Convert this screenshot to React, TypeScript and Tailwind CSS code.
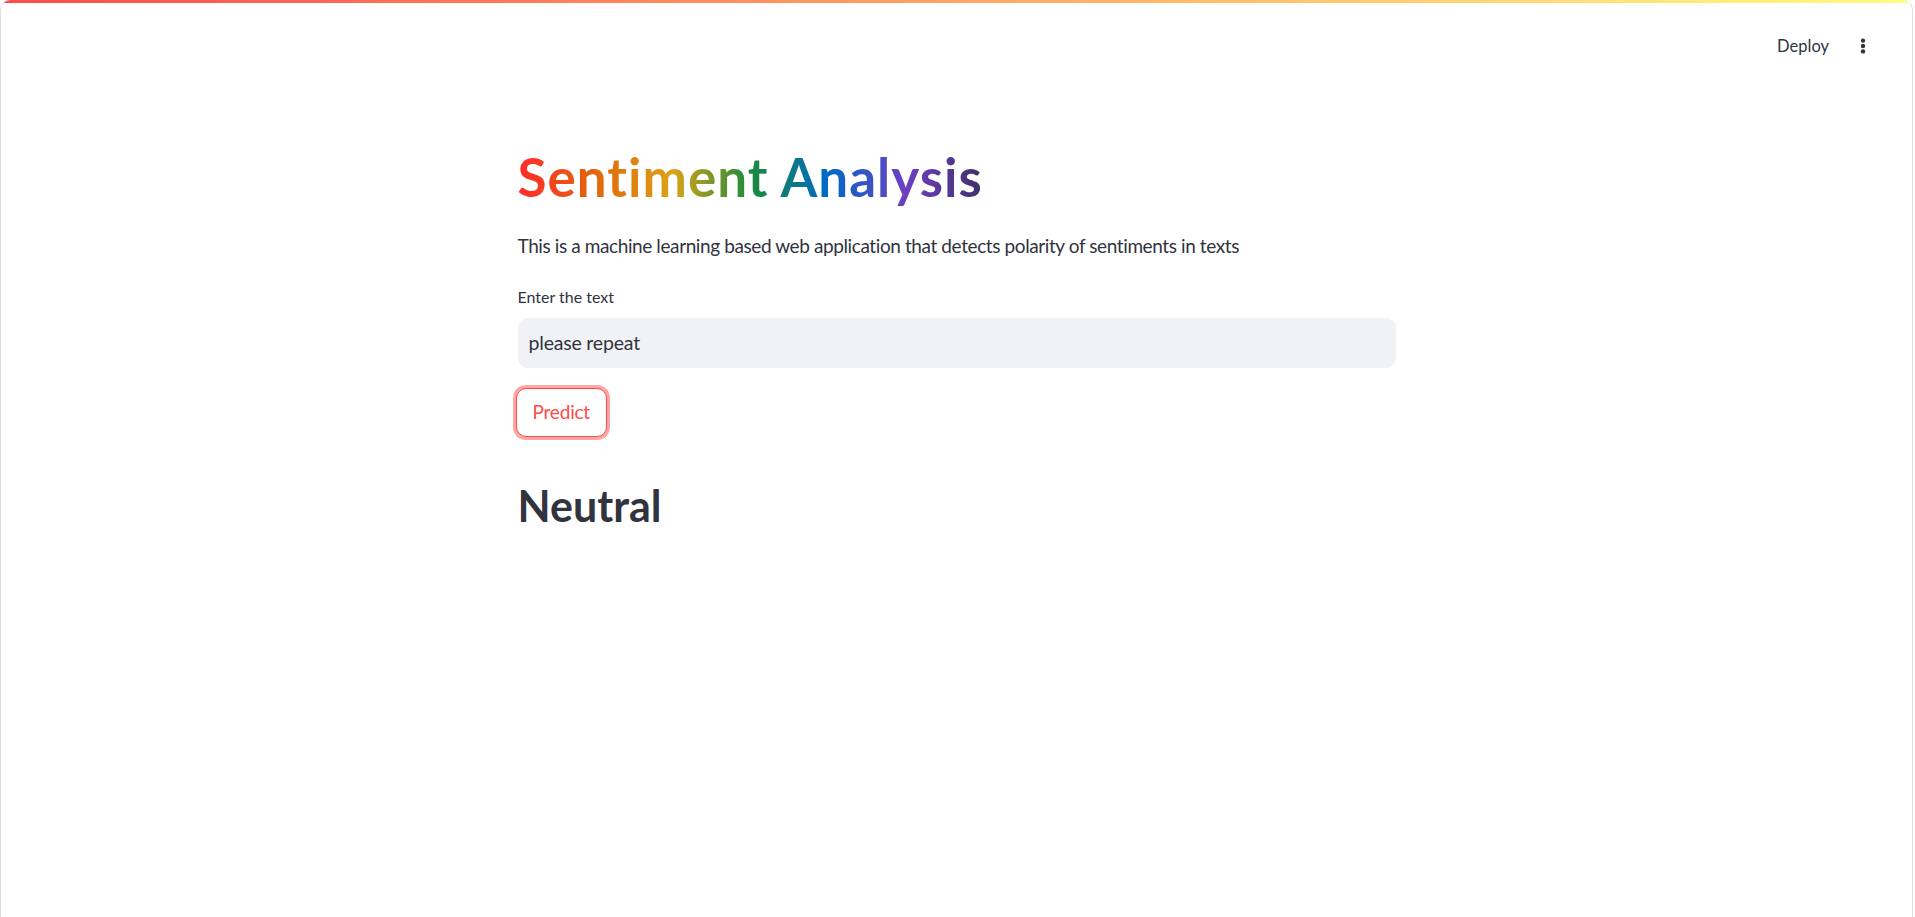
import { useState } from "react"

function MoreIcon() {
  return (
    <svg width="20" height="20" viewBox="0 0 20 20" fill="#31333f">
      <circle cx="10" cy="4.6" r="2.2" />
      <circle cx="10" cy="10" r="2.2" />
      <circle cx="10" cy="15.4" r="2.2" />
    </svg>
  )
}

export default function App() {
  const [text, setText] = useState("please repeat")

  return (
    <div className="h-[917px] w-full overflow-hidden bg-white font-['Lato',sans-serif] text-[#31333f]">
      <div className="relative h-full w-[1913px] overflow-hidden rounded-t-[10px] border-x border-[#dedede] bg-white">
        {/* top decoration bar */}
        <div className="h-[3px] w-full bg-[linear-gradient(90deg,#ff4b4b,#fffd80)]" />

        {/* header */}
        <div className="flex h-[86px] items-center justify-end pr-[34px]">
          <button className="px-[6px] text-[16.5px] leading-[22px] text-[#31333f]">
            Deploy
          </button>
          <button className="ml-[13px] flex h-[30px] w-[30px] items-center justify-center">
            <MoreIcon />
          </button>
        </div>

        {/* main block */}
        <div className="mx-auto w-[878px]">
          <h1 className="mt-[55px] h-[66px] text-[53px] font-bold leading-[66px] tracking-[1px]">
            <span className="bg-[linear-gradient(to_right,#ff2b2b,#e2660c,#daa316,#1b8a3c,#0068c9,#6d3fc0,#40306a)] bg-clip-text text-transparent">
              Sentiment Analysis
            </span>
          </h1>

          <p className="mt-[20px] h-[32px] text-[19px] leading-[32px] tracking-[-0.4px]">
            This is a machine learning based web application that detects polarity of sentiments in texts
          </p>

          <label className="mt-[24px] block h-[22px] text-[16px] leading-[22px]">
            Enter the text
          </label>

          <div className="mt-[10px] flex h-[50px] items-center rounded-[10px] border border-[#f0f2f6] bg-[#f0f2f6] px-[10px]">
            <input
              value={text}
              onChange={(e) => setText(e.target.value)}
              className="w-full bg-transparent text-[19.5px] tracking-[-0.2px] text-[#31333f] outline-none"
            />
          </div>

          <button className="-ml-[2px] mt-[20px] flex h-[49px] items-center rounded-[10px] border border-[#ff4b4b] bg-white px-[16px] text-[19px] tracking-[-0.2px] text-[#ff4b4b] shadow-[0_0_0_3px_rgba(255,75,75,0.5)]">
            Predict
          </button>

          <h2 className="mt-[42px] h-[54px] text-[43px] font-bold leading-[54px]">
            Neutral
          </h2>
        </div>
      </div>
    </div>
  )
}
